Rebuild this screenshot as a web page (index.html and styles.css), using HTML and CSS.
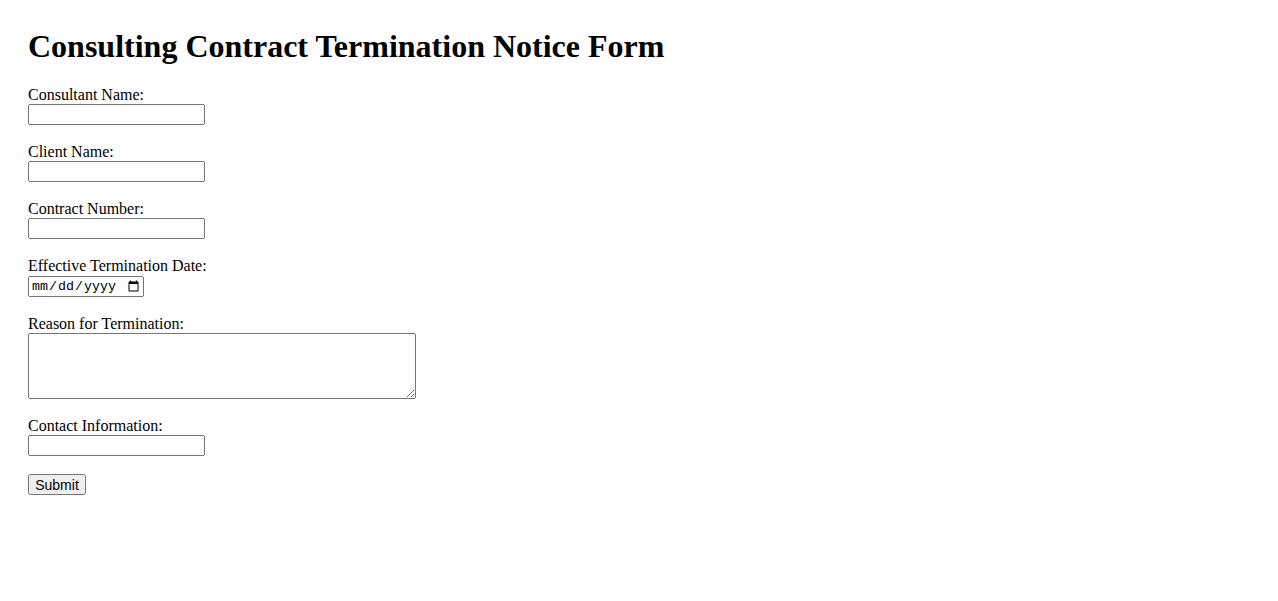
FILE: index.html
```html
<!DOCTYPE html>
<html lang="en">
<head>
<meta charset="utf-8">
<title>Consulting Contract Termination Notice Form</title>
<link rel="stylesheet" href="styles.css">
</head>
<body>
<h1 class="title">Consulting Contract Termination Notice Form</h1>
<form class="form">
  <div class="field">
    <label class="label" for="consultant">Consultant Name:</label>
    <input class="text-input" type="text" id="consultant">
  </div>
  <div class="field">
    <label class="label" for="client">Client Name:</label>
    <input class="text-input" type="text" id="client">
  </div>
  <div class="field">
    <label class="label" for="contract">Contract Number:</label>
    <input class="text-input" type="text" id="contract">
  </div>
  <div class="field">
    <label class="label label-date" for="date">Effective Termination Date:</label>
    <input class="date-input" type="date" id="date">
  </div>
  <div class="field">
    <label class="label" for="reason">Reason for Termination:</label>
    <textarea class="text-area" id="reason"></textarea>
  </div>
  <div class="field">
    <label class="label" for="contact">Contact Information:</label>
    <input class="text-input" type="text" id="contact">
  </div>
  <button class="submit" type="submit">Submit</button>
</form>
</body>
</html>
```
FILE: styles.css
```css
html, body {
  background: #ffffff;
}
body {
  margin: 0;
  padding: 28px 28px;
  font-family: "Liberation Serif", "Times New Roman", serif;
  font-size: 16px;
  color: #000000;
}
.title {
  margin: 0 0 21px 0;
  font-size: 32px;
  line-height: 37px;
  font-weight: bold;
}
.form {
  display: flex;
  flex-direction: column;
  align-items: flex-start;
}
.field {
  display: flex;
  flex-direction: column;
  align-items: flex-start;
  margin-bottom: 18px;
}
.label {
  display: block;
  line-height: 18px;
  height: 18px;
}
.label-date {
  height: 19px;
}
.text-input {
  box-sizing: border-box;
  width: 177px;
  height: 21px;
  margin: 0;
}
.date-input {
  box-sizing: border-box;
  width: 116px;
  height: 21px;
  margin: 0;
  font-family: "Liberation Mono", monospace;
  font-size: 13.33px;
}
.text-area {
  box-sizing: border-box;
  width: 388px;
  height: 66px;
  margin: 0;
}
.submit {
  box-sizing: border-box;
  width: 58px;
  height: 21px;
  margin: 0;
  padding: 0;
  font-family: "Liberation Sans", Arial, sans-serif;
  font-size: 14px;
}
```
